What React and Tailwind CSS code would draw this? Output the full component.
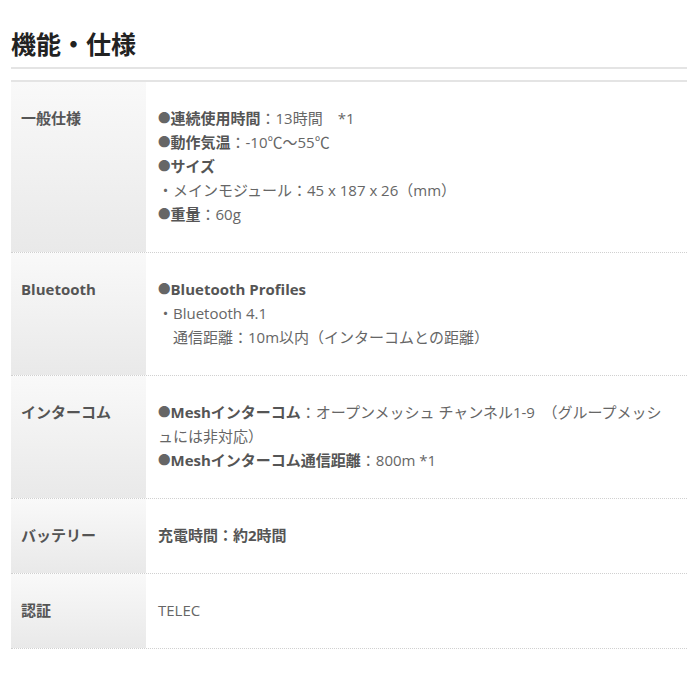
import React from 'react';

const font = { fontFamily: '"Open Sans", "Noto Sans CJK JP", sans-serif' };

const B = ({ children }) => <span className="font-bold text-[#555]">{children}</span>;
const Dot = () => <span className="text-[#666] text-[12.5px] leading-none align-[1px] font-['Noto_Sans_CJK_JP']">●</span>;

const rows = [
  {
    label: "一般仕様",
    body: (
      <>
        <div><Dot /><B>連続使用時間</B>：13時間　*1</div>
        <div><Dot /><B>動作気温</B>：-10℃～55℃</div>
        <div><Dot /><B>サイズ</B></div>
        <div>・メインモジュール：45 x 187 x 26（mm）</div>
        <div><Dot /><B>重量</B>：60g</div>
      </>
    ),
  },
  {
    label: "Bluetooth",
    body: (
      <>
        <div><Dot /><B>Bluetooth Profiles</B></div>
        <div>・Bluetooth 4.1</div>
        <div className="pl-[15px]">通信距離：10m以内（インターコムとの距離）</div>
      </>
    ),
  },
  {
    label: "インターコム",
    body: (
      <>
        <div><Dot /><B>Meshインターコム</B>：オープンメッシュ チャンネル1-9　（グループメッシ<br />ュには非対応）</div>
        <div><Dot /><B>Meshインターコム通信距離</B>：800m *1</div>
      </>
    ),
  },
  {
    label: "バッテリー",
    body: <div><B>充電時間：約2時間</B></div>,
  },
  {
    label: "認証",
    body: <div>TELEC</div>,
  },
];

export default function App() {
  return (
    <div className="bg-white min-h-[700px] px-[11px] pt-[27px]" style={font}>
      <h2 className="text-[25px] leading-[34px] font-bold text-[#222] pb-[6px] border-b-2 border-[#e4e4e4] w-[676px]">
        機能・仕様
      </h2>
      <div className="mt-[11px] border-t-2 border-[#e4e4e4] w-[676px]">
        {rows.map((r) => (
          <div key={r.label} className="flex border-b border-dotted border-[#d0d0d0]">
            <div className="w-[135px] shrink-0 pl-[10px] pt-[24px] pb-[26px] text-[15px] leading-[24px] font-bold text-[#555] bg-gradient-to-b from-[#f9f9f9] to-[#e9e9e9]">
              {r.label}
            </div>
            <div className="flex-1 pl-[12px] pr-[2px] pt-[24px] pb-[26px] text-[15px] leading-[24px] text-[#666]">
              {r.body}
            </div>
          </div>
        ))}
      </div>
    </div>
  );
}
